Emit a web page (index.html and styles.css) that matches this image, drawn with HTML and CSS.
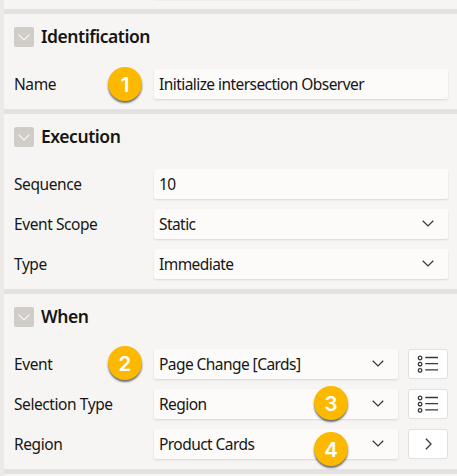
FILE: index.html
```html
<!DOCTYPE html>
<html lang="en">
<head>
<meta charset="utf-8">
<title>Dynamic Action Properties</title>
<link rel="stylesheet" href="styles.css">
</head>
<body>
<svg class="defs" width="0" height="0">
  <symbol id="down" viewBox="0 0 12 7"><path d="M.7.7 6 5.9 11.3.7"/></symbol>
  <symbol id="right" viewBox="0 0 7 12"><path d="M.9.8 6 6 .9 11.2"/></symbol>
  <symbol id="list" viewBox="0 0 22 18"><circle cx="3.1" cy="3" r="1.8"/><circle cx="3.1" cy="9.2" r="1.8"/><circle cx="3.1" cy="15.4" r="1.8"/><path d="M8.3 2.5H21M8.3 8.7H21M8.3 14.9H21"/></symbol>
</svg>
<main class="panel">
  <div class="previous"></div>
  <section class="group">
    <h2 class="heading"><span class="toggle"><svg><use href="#down"/></svg></span><span>Identification</span></h2>
    <div class="row"><label class="label">Name</label><div class="field"><span>Initialize intersection Observer</span></div><b class="badge one">1</b></div>
  </section>
  <section class="group">
    <h2 class="heading"><span class="toggle"><svg><use href="#down"/></svg></span><span>Execution</span></h2>
    <div class="row"><label class="label">Sequence</label><div class="field"><span>10</span></div></div>
    <div class="row"><label class="label">Event Scope</label><div class="field"><span>Static</span><svg class="chevron"><use href="#down"/></svg></div></div>
    <div class="row"><label class="label">Type</label><div class="field"><span>Immediate</span><svg class="chevron"><use href="#down"/></svg></div></div>
  </section>
  <section class="group">
    <h2 class="heading"><span class="toggle"><svg><use href="#down"/></svg></span><span>When</span></h2>
    <div class="row"><label class="label">Event</label><div class="field"><span>Page Change [Cards]</span><svg class="chevron"><use href="#down"/></svg></div><button class="button"><svg class="list"><use href="#list"/></svg></button><b class="badge two">2</b></div>
    <div class="row"><label class="label">Selection Type</label><div class="field"><span>Region</span><svg class="chevron"><use href="#down"/></svg></div><button class="button"><svg class="list"><use href="#list"/></svg></button><b class="badge three">3</b></div>
    <div class="row"><label class="label">Region</label><div class="field"><span>Product Cards</span><svg class="chevron"><use href="#down"/></svg></div><button class="button"><svg class="right"><use href="#right"/></svg></button><b class="badge four">4</b></div>
  </section>
</main>
</body>
</html>
```
FILE: styles.css
```css
* { box-sizing: border-box; }
body { margin: 0; background: #f6f5f3; color: #161513; font: 15.5px/30px "Noto Sans", sans-serif; letter-spacing: -0.45px; overflow: hidden; }
.defs { position: absolute; }
svg { fill: none; stroke: #3a3836; stroke-width: 1.3; }
.panel { height: 476px; border-left: 4px solid #ede9e6; }
.previous { height: 14px; border-bottom: 5px solid #e4e2e0; }
.previous::before { content: ""; display: block; width: 206px; height: 1px; margin-left: 150px; background: #eeedeb; }
.group { padding: 0 9px 5px 10px; border-bottom: 5px solid #e4e2e0; }
.group:nth-child(2) { height: 100px; }
.group:nth-child(3), .group:nth-child(4) { height: 180px; }
.heading { display: flex; align-items: center; gap: 7px; height: 50px; margin: 0; padding-bottom: 4px; font-size: 17.5px; font-weight: 600; line-height: 28px; }
.heading span:last-child { margin-bottom: 2px; }
.toggle { display: flex; align-items: center; justify-content: center; width: 20px; height: 20px; border-radius: 2px; background: #d0ccc8; }
.toggle svg { width: 12px; height: 7px; stroke: #f5f4f2; }
.row { position: relative; display: flex; align-items: center; height: 40px; }
.label { width: 140px; flex: none; letter-spacing: -0.42px; }
.field { display: flex; align-items: center; flex: 1; height: 30px; padding: 0 14px 0 5px; border-radius: 2px; background: #fcfbfa; box-shadow: 0 1px 2px #0000001f; white-space: nowrap; letter-spacing: -0.56px; }
.chevron { width: 12px; height: 7px; margin: 0 0 1px auto; }
.button { display: flex; align-items: center; justify-content: center; width: 40px; height: 30px; margin-left: 10px; padding: 0; border: 1px solid #e3e1df; border-radius: 3px; background: #fff; }
.list { width: 22px; height: 18px; }
.right { width: 7px; height: 12px; }
.badge { position: absolute; width: 34px; height: 34px; border-radius: 50%; background: #fcb900; box-shadow: 0 2px 2px #0000008c; color: #fff; font: 600 20.5px/35px Inter, sans-serif; text-align: center; letter-spacing: 0; }
.one { left: 94px; top: 3px; }
.two { left: 94px; top: 2px; }
.three { left: 300px; top: 2px; }
.four { left: 300px; top: 8px; }
```
